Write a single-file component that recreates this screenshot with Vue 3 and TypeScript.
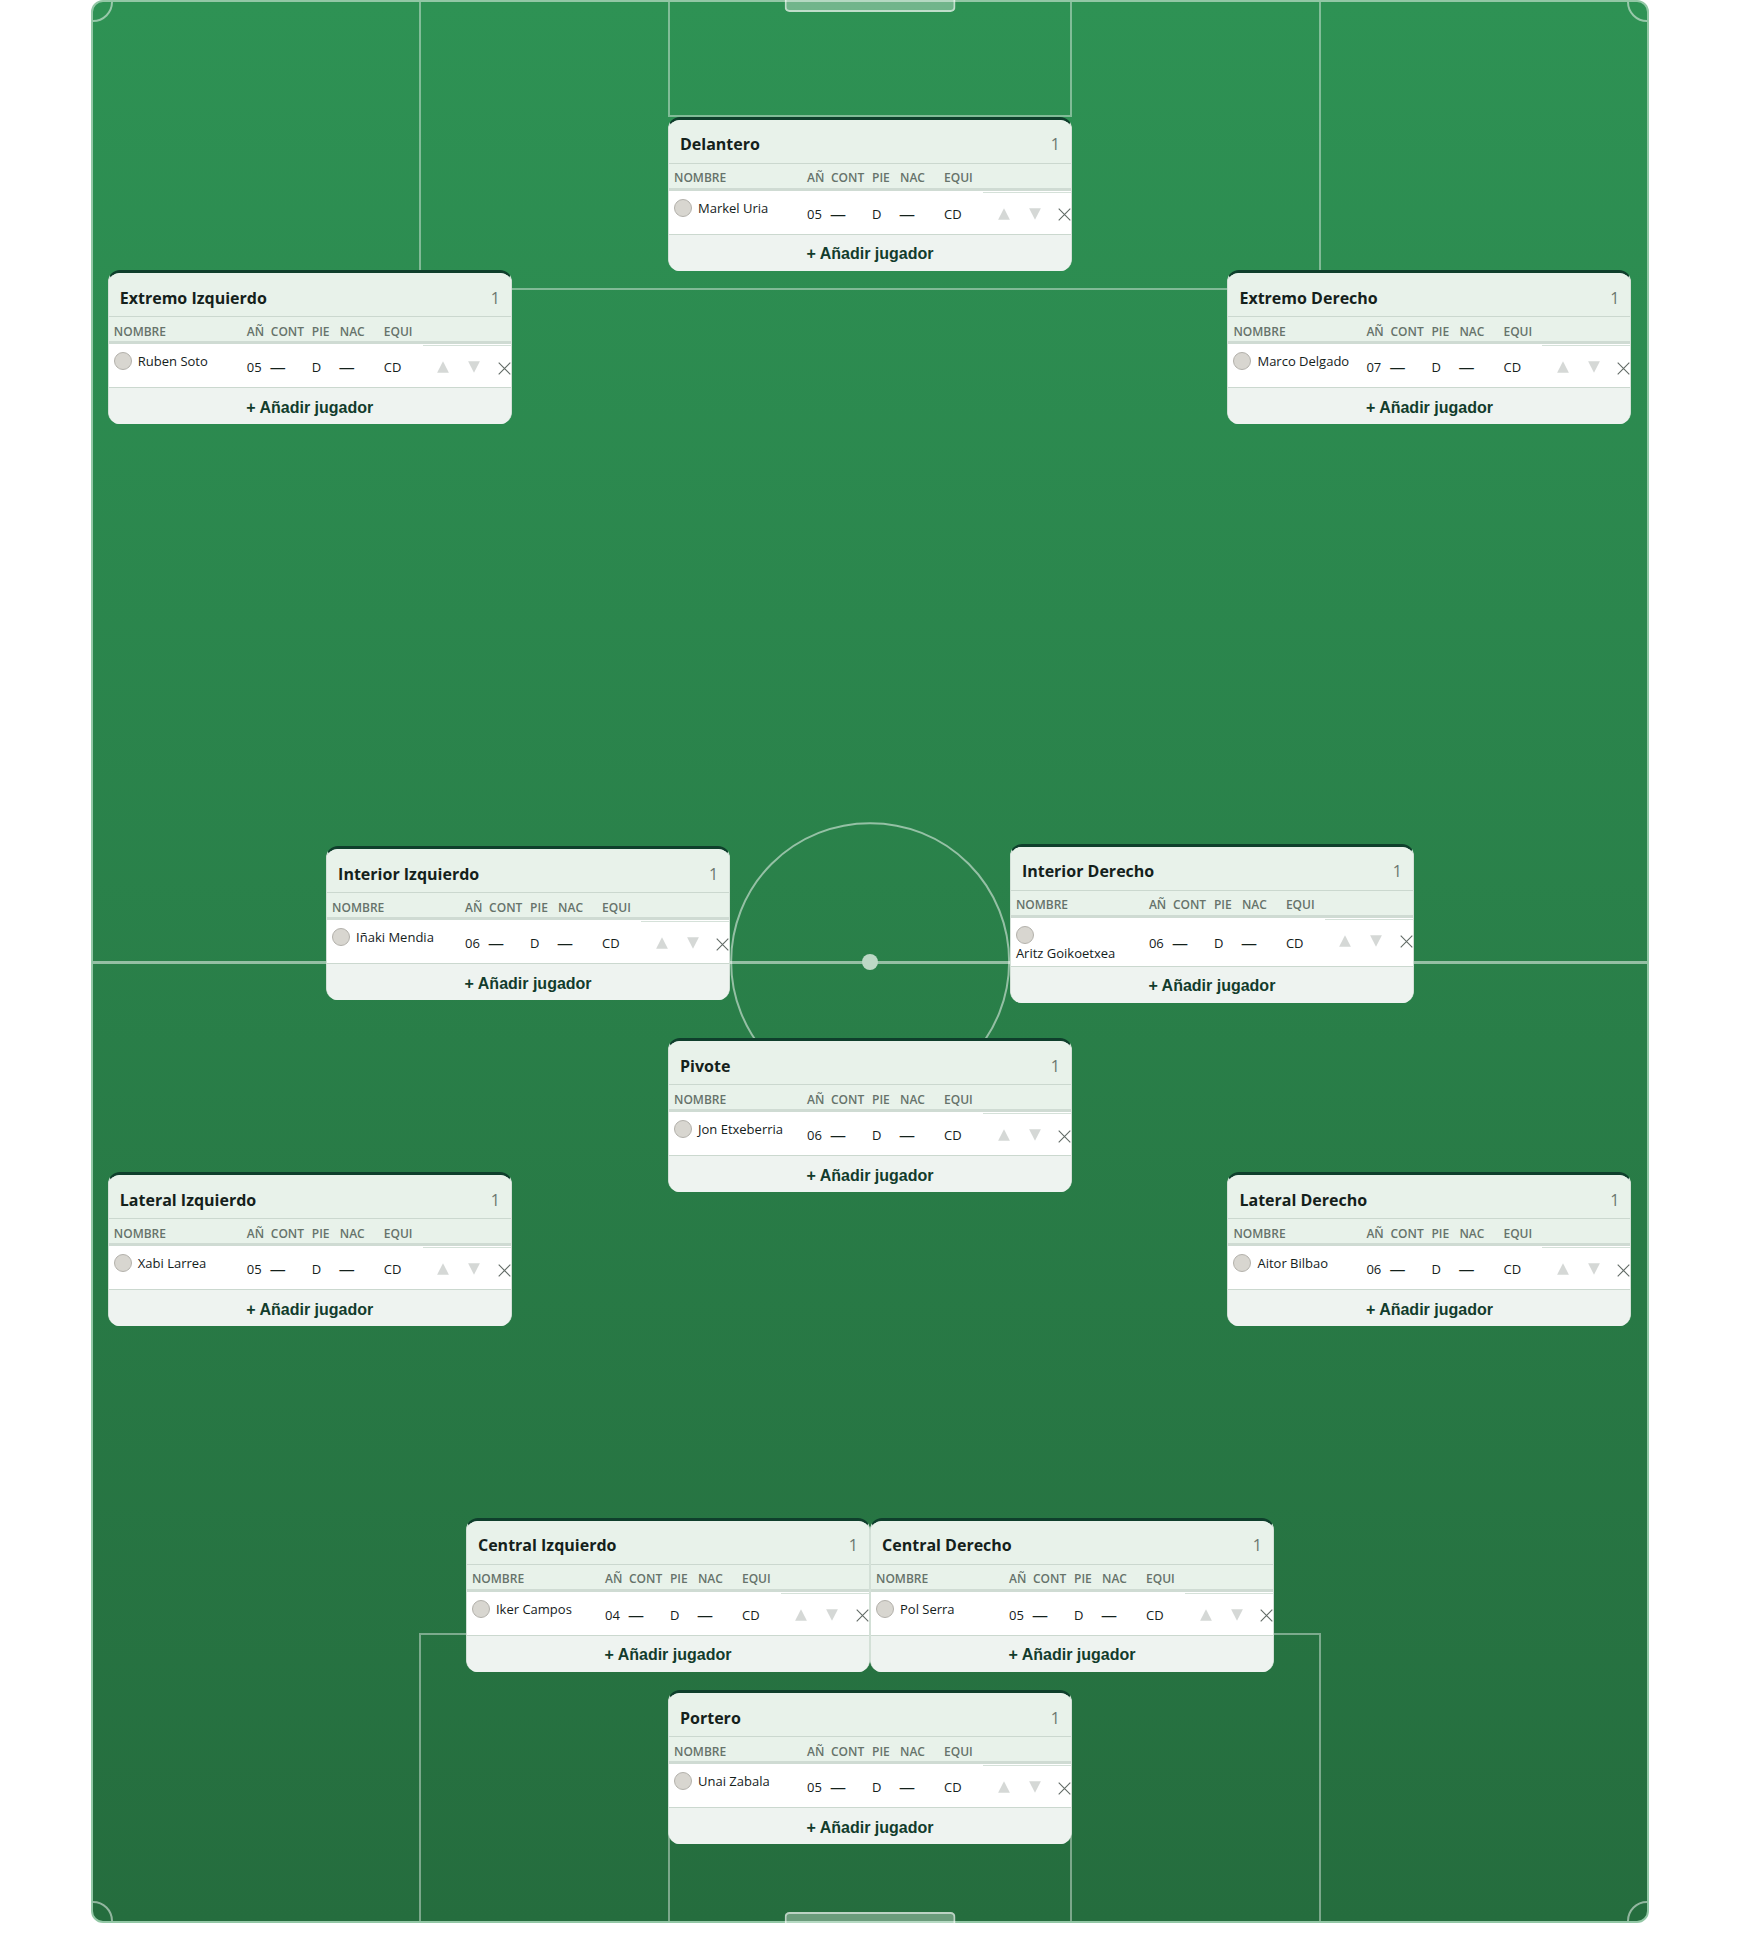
<script setup lang="ts">
interface Player {
  name: string
  year: string
  contract: string
  foot: string
  nation: string
  team: string
}

interface Position {
  title: string
  x: number
  y: number
  players: Player[]
}

const player = (name: string, year: string): Player => ({
  name,
  year,
  contract: '—',
  foot: 'D',
  nation: '—',
  team: 'CD',
})

// x and y are the centre of each card, in percent of the pitch
const positions: Position[] = [
  { title: 'Delantero', x: 50, y: 10, players: [player('Markel Uria', '05')] },
  { title: 'Extremo Izquierdo', x: 13.95, y: 18, players: [player('Ruben Soto', '05')] },
  { title: 'Extremo Derecho', x: 86, y: 18, players: [player('Marco Delgado', '07')] },
  { title: 'Interior Izquierdo', x: 28, y: 48, players: [player('Iñaki Mendia', '06')] },
  { title: 'Interior Derecho', x: 72, y: 48, players: [player('Aritz Goikoetxea', '06')] },
  { title: 'Pivote', x: 50, y: 58, players: [player('Jon Etxeberria', '06')] },
  { title: 'Lateral Izquierdo', x: 13.95, y: 65, players: [player('Xabi Larrea', '05')] },
  { title: 'Lateral Derecho', x: 86, y: 65, players: [player('Aitor Bilbao', '06')] },
  { title: 'Central Izquierdo', x: 37, y: 83, players: [player('Iker Campos', '04')] },
  { title: 'Central Derecho', x: 63, y: 83, players: [player('Pol Serra', '05')] },
  { title: 'Portero', x: 50, y: 92, players: [player('Unai Zabala', '05')] },
]
</script>

<template>
  <main class="pitch">
    <div class="lines" aria-hidden="true">
      <div class="halfway"></div>
      <div class="circle"></div>
      <div class="spot"></div>
      <div class="box penalty top"></div>
      <div class="box penalty bottom"></div>
      <div class="box area top"></div>
      <div class="box area bottom"></div>
      <div class="corner tl"></div>
      <div class="corner tr"></div>
      <div class="corner bl"></div>
      <div class="corner br"></div>
    </div>
    <div class="goal goal-top" aria-hidden="true"></div>
    <div class="goal goal-bottom" aria-hidden="true"></div>

    <div
      v-for="p in positions"
      :key="p.title"
      class="slot"
      :style="{ left: p.x + '%', top: p.y + '%' }"
    >
      <section class="card">
        <header class="head">
          <h2>{{ p.title }}</h2>
          <span class="count">{{ p.players.length }}</span>
        </header>
        <table>
          <colgroup>
            <col class="c-name" />
            <col class="c-year" />
            <col class="c-cont" />
            <col class="c-foot" />
            <col class="c-nac" />
            <col class="c-team" />
            <col />
          </colgroup>
          <thead>
            <tr>
              <th>NOMBRE</th>
              <th>AÑ</th>
              <th>CONT</th>
              <th>PIE</th>
              <th>NAC</th>
              <th>EQUI</th>
              <th></th>
            </tr>
          </thead>
          <tbody>
            <tr v-for="j in p.players" :key="j.name">
              <td class="name">
                <div class="who">
                  <span class="avatar"></span>
                  <span>{{ j.name }}</span>
                </div>
              </td>
              <td>{{ j.year }}</td>
              <td class="dash">{{ j.contract }}</td>
              <td>{{ j.foot }}</td>
              <td class="dash">{{ j.nation }}</td>
              <td>{{ j.team }}</td>
              <td class="actions">
                <div class="tools">
                  <button type="button" aria-label="Subir" disabled>
                    <svg width="12" height="12" viewBox="0 0 12 12"><path d="M6 0.3 11.9 11.7H0.1Z" fill="#d5d8d6" /></svg>
                  </button>
                  <button type="button" aria-label="Bajar" disabled>
                    <svg width="12" height="12" viewBox="0 0 12 12"><path d="M0.1 0.3H11.9L6 11.7Z" fill="#d5d8d6" /></svg>
                  </button>
                  <button type="button" class="remove" aria-label="Quitar">
                    <svg width="13" height="13" viewBox="0 0 13 13"><path d="M0.7 0.7 12.3 12.3M12.3 0.7 0.7 12.3" stroke="#626b66" stroke-width="1.1" fill="none" /></svg>
                  </button>
                </div>
              </td>
            </tr>
          </tbody>
        </table>
        <button type="button" class="add">+ Añadir jugador</button>
      </section>
    </div>
  </main>
</template>

<style>
body {
  background: #fff;
}
</style>

<style scoped>
* {
  box-sizing: border-box;
}

.pitch {
  position: relative;
  width: calc(100% - 182px);
  aspect-ratio: 1558 / 1923;
  margin: 0 auto;
  border: 2px solid #92c7a5;
  border-radius: 12px;
  background: linear-gradient(#2e9254, #256d3e);
  font-family: "Segoe UI", "Open Sans", "Noto Sans", sans-serif;
  color: #14211b;
}

.lines {
  position: absolute;
  inset: 0;
  overflow: hidden;
  border-radius: 10px;
}

.lines > div {
  position: absolute;
  border: 2px solid rgba(255, 255, 255, 0.4);
}

.lines .halfway {
  left: 0;
  right: 0;
  top: 50%;
  height: 3px;
  margin-top: -1px;
  border: 0;
  background: rgba(255, 255, 255, 0.5);
}

.lines .circle {
  left: 50%;
  top: 50%;
  width: 18%;
  aspect-ratio: 1;
  transform: translate(-50%, -50%);
  border-color: rgba(255, 255, 255, 0.5);
  border-radius: 50%;
}

.lines .spot {
  left: 50%;
  top: 50%;
  width: 16px;
  height: 16px;
  margin: -8px;
  border: 0;
  border-radius: 50%;
  background: #bcd8c5;
}

.lines .penalty {
  left: 21%;
  width: 58%;
  height: 15%;
}

.lines .area {
  left: 37%;
  width: 26%;
  height: 6%;
}

.lines .top {
  top: 0;
  border-top: 0;
}

.lines .bottom {
  bottom: 0;
  border-bottom: 0;
}

.lines .corner {
  width: 40px;
  height: 40px;
  margin: -20px;
  border-color: rgba(255, 255, 255, 0.5);
  border-radius: 50%;
}

.tl { left: 0; top: 0; }
.tr { right: 0; top: 0; }
.bl { left: 0; bottom: 0; }
.br { right: 0; bottom: 0; }

.goal {
  position: absolute;
  left: 50%;
  width: 11%;
  height: 12px;
  transform: translateX(-50%);
  border: 2px solid rgba(255, 255, 255, 0.55);
  background: rgba(255, 255, 255, 0.32);
}

.goal-top {
  top: -2px;
  border-top: 0;
  border-radius: 0 0 5px 5px;
}

.goal-bottom {
  bottom: -3px;
  border-bottom: 0;
  border-radius: 5px 5px 0 0;
}

.slot {
  position: absolute;
  display: flex;
  align-items: center;
  justify-content: center;
  width: 0;
  height: 0;
}

.card {
  flex: none;
  width: 404px;
  overflow: hidden;
  border: 1px solid #d3e0d7;
  border-top: 3px solid #0f3f2c;
  border-bottom: 0;
  border-radius: 12px;
  background: #fff;
}

.head {
  display: flex;
  align-items: center;
  justify-content: space-between;
  height: 44px;
  padding: 6px 11px 0 11px;
  border-bottom: 1px solid #cbd8cf;
  background: #e8f2ea;
}

h2 {
  margin: 0;
  font-size: 16px;
  font-weight: 700;
  line-height: 22px;
}

.count {
  color: #6b776f;
  font-size: 16px;
  line-height: 22px;
}

table {
  width: 100%;
  table-layout: fixed;
  border-collapse: separate;
  border-spacing: 0;
}

.c-name { width: 133px; }
.c-year { width: 24px; }
.c-cont { width: 41px; }
.c-foot { width: 28px; }
.c-nac { width: 44px; }
.c-team { width: 44px; }

th {
  height: 27px;
  padding: 5px 0 0 5px;
  border-bottom: 3px solid #cfdbd3;
  background: #e8f2ea;
  color: #66736b;
  font-size: 12px;
  font-weight: 600;
  line-height: 16px;
  text-align: left;
  white-space: nowrap;
}

td {
  height: 44px;
  padding: 3px 0 0 5px;
  border-bottom: 1px solid #cbd8cf;
  font-size: 13px;
  line-height: 18px;
  vertical-align: middle;
  white-space: nowrap;
}

td.dash {
  padding-left: 4px;
  font-size: 16px;
}

td.name {
  padding: 8px 10px 4px 5px;
  vertical-align: top;
}

.who {
  display: flex;
  flex-wrap: wrap;
  align-items: center;
  column-gap: 6px;
}

.avatar {
  width: 18px;
  height: 18px;
  border: 1px solid #b3b1ab;
  border-radius: 50%;
  background: #d8d6d0;
}

td.actions {
  padding: 0 0 0 5px;
  box-shadow: inset 0 1px 0 #fff, inset 0 2px 0 #d5e1d9;
  vertical-align: top;
}

.tools {
  display: flex;
  padding-top: 11px;
}

.tools button {
  display: flex;
  flex: none;
  align-items: center;
  justify-content: center;
  width: 31px;
  height: 24px;
  padding: 0;
  border: 0;
  background: none;
}

.tools .remove {
  justify-content: flex-end;
  width: 21px;
  padding-top: 2px;
}

.add {
  display: block;
  width: 100%;
  height: 36px;
  padding: 3px 0 0;
  border: 0;
  background: #eef3f0;
  color: #123c2c;
  font-family: "Liberation Sans", Arial, sans-serif;
  font-size: 16px;
  font-weight: 700;
  line-height: 20px;
}
</style>
